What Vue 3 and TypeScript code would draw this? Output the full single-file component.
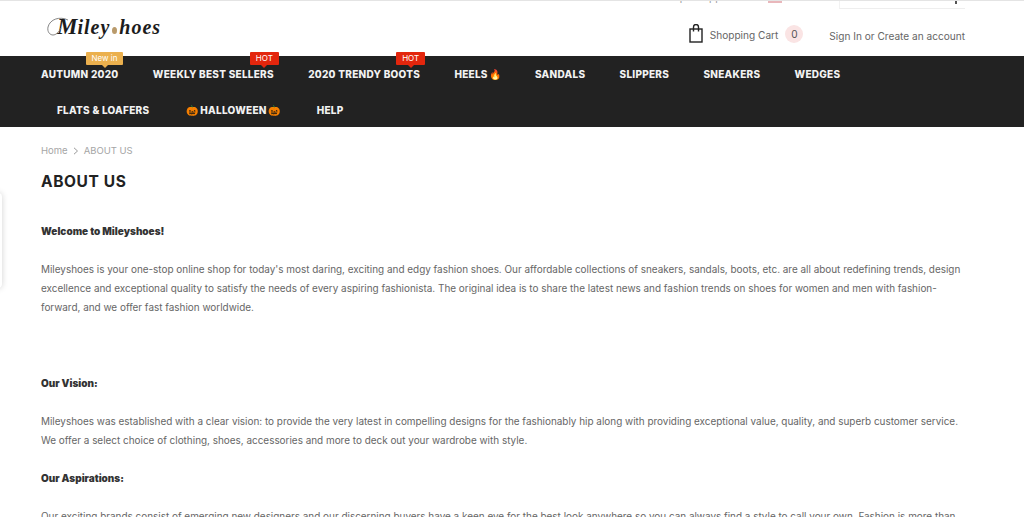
<template>
  <div class="page">
    <div class="topstrip">
      <span class="topinfo">
        <span class="clipped">Help &amp; support</span>
        <i class="flag"></i>
      </span>
      <div class="searchbox"><i class="searchdot"></i></div>
    </div>

    <header class="head">
      <div class="logo">
        <svg class="swash" width="22" height="22" viewBox="0 0 22 22" fill="none" stroke="#777" stroke-width="0.9">
          <path d="M21 3C13 -1 3 2 1 10c-1 5 2 8 5 8 3 0 6-3 8-7" />
        </svg>
        <span class="cap">M</span>iley<i class="logodot"></i>hoes
      </div>
      <div class="headright">
        <svg class="bag" width="14" height="19" viewBox="0 0 14 19" fill="none" stroke="#222" stroke-width="1.4">
          <rect x="1" y="5" width="12" height="13" />
          <path d="M4.500 7.500V3a2.500 2.500 0 0 1 5 0v4.500" />
        </svg>
        <span class="cart">Shopping Cart</span>
        <span class="count">0</span>
        <span class="account">Sign In or Create an account</span>
      </div>
    </header>

    <nav class="nav">
      <div v-for="(row, r) in navRows" :key="r" class="navrow" :class="'row' + r">
        <a v-for="item in row" :key="item.label" class="navitem">
          <span v-if="item.pre" class="emoji pre">{{ item.pre }}</span>{{ item.label }}<span v-if="item.post" class="emoji">{{ item.post }}</span>
          <span v-if="item.tag" class="tag" :class="item.tag === 'HOT' ? 'hot' : 'new'">{{ item.tag }}</span>
        </a>
      </div>
    </nav>

    <main class="content">
      <div class="crumbs">
        <span>Home</span>
        <svg width="6" height="8" viewBox="0 0 6 8" fill="none" stroke="#999" stroke-width="1"><path d="M1 .8 4.500 4 1 7.200" /></svg>
        <span>ABOUT US</span>
      </div>
      <h1>ABOUT US</h1>
      <p class="strong first">Welcome to Mileyshoes!</p>
      <p class="body">Mileyshoes is your one-stop online shop for today's most daring, exciting and edgy fashion shoes. Our affordable collections of sneakers, sandals, boots, etc. are all about redefining trends, design excellence and exceptional quality to satisfy the needs of every aspiring fashionista. The original idea is to share the latest news and fashion trends on shoes for women and men with fashion-forward, and we offer fast fashion worldwide.</p>
      <p class="strong vision">Our Vision:</p>
      <p class="body">Mileyshoes was established with a clear vision: to provide the very latest in compelling designs for the fashionably hip along with providing exceptional value, quality, and superb customer service. We offer a select choice of clothing, shoes, accessories and more to deck out your wardrobe with style.</p>
      <p class="strong asp">Our Aspirations:</p>
      <p class="body">Our exciting brands consist of emerging new designers and our discerning buyers have a keen eye for the best look anywhere so you can always find a style to call your own. Fashion is more than just clothes, it is a way to express yourself every single day.</p>
    </main>

    <div class="sidetab"></div>
  </div>
</template>

<script setup lang="ts">
interface NavItem {
  label: string
  tag?: string
  pre?: string
  post?: string
}

const navRows: NavItem[][] = [
  [
    { label: 'AUTUMN 2020', tag: 'New in' },
    { label: 'WEEKLY BEST SELLERS', tag: 'HOT' },
    { label: '2020 TRENDY BOOTS', tag: 'HOT' },
    { label: 'HEELS', post: '🔥' },
    { label: 'SANDALS' },
    { label: 'SLIPPERS' },
    { label: 'SNEAKERS' },
    { label: 'WEDGES' },
  ],
  [
    { label: 'FLATS & LOAFERS' },
    { label: 'HALLOWEEN', pre: '🎃', post: '🎃' },
    { label: 'HELP' },
  ],
]
</script>

<style>
html, body {
  margin: 0;
  background: #fff;
  overflow: hidden;
}
</style>

<style scoped>
.page {
  height: 517px;
  overflow: hidden;
  position: relative;
  font-family: Inter, "Liberation Sans", sans-serif;
  color: #555;
}

.topstrip {
  height: 9px;
  border-top: 1px solid #e4e4e4;
  box-sizing: border-box;
  display: flex;
  justify-content: flex-end;
  padding-right: 59px;
  overflow: hidden;
}
.topinfo {
  display: flex;
  align-items: flex-start;
  gap: 8px;
  margin-right: 57px;
  font-size: 10px;
  line-height: 12px;
  height: 3px;
  overflow: hidden;
  color: #999;
  width: 118px;
}
.clipped {
  display: block;
  width: 96px;
  margin-top: -10px;
}
.flag {
  display: block;
  width: 14px;
  height: 2px;
  background: #e9b7bb;
}
.searchbox {
  width: 126px;
  height: 8px;
  border-bottom: 1px solid #eee;
  border-left: 1px solid #f2f2f2;
  box-sizing: border-box;
  position: relative;
}
.searchdot {
  position: absolute;
  right: 8px;
  top: 0;
  width: 2px;
  height: 3px;
  background: #555;
}

.head {
  height: 47px;
  display: flex;
  justify-content: space-between;
  align-items: flex-start;
  padding: 0 59px 0 57px;
}
.logo {
  position: relative;
  font-family: "Liberation Serif", serif;
  font-style: italic;
  font-weight: 700;
  font-size: 20px;
  letter-spacing: 1px;
  line-height: 26px;
  color: #1c1c1c;
  margin-top: 5px;
  display: flex;
  align-items: baseline;
}
.swash {
  position: absolute;
  left: -10px;
  top: 3px;
}
.cap {
  font-size: 23px;
  margin-right: -1px;
}
.logodot {
  width: 5px;
  height: 7px;
  border-radius: 50%;
  background: #b99a6b;
  margin: 0 2px 0;
}
.headright {
  display: flex;
  align-items: center;
  margin-top: 16px;
  font-size: 10.100px;
  color: #666;
}
.bag {
  margin-right: 7px;
  margin-top: -1px;
}
.cart {
  margin-top: 1px;
}
.count {
  width: 18px;
  height: 18px;
  border-radius: 50%;
  background: #fae4e4;
  color: #555;
  text-align: center;
  line-height: 18px;
  margin-left: 7px;
  margin-right: 26px;
}
.account {
  margin-top: 3px;
}

.nav {
  background: #222;
  height: 71px;
  box-sizing: border-box;
  padding-left: 41px;
}
.navrow {
  display: flex;
  height: 36px;
  align-items: center;
  gap: 34.300px;
}
.row1 {
  padding-left: 16px;
  gap: 37px;
}
.navitem {
  position: relative;
  font-weight: 800;
  font-size: 10px;
  letter-spacing: 0.26px;
  color: #f2f2f2;
  white-space: nowrap;
  display: flex;
  align-items: center;
}
.emoji {
  font-size: 10px;
  letter-spacing: 0;
  margin-left: 1px;
}
.emoji.pre {
  margin: 0 2px 0 0;
}
.tag {
  position: absolute;
  top: -16px;
  right: -5px;
  height: 13px;
  line-height: 13px;
  padding: 0 5px;
  font-size: 8px;
  font-weight: 400;
  letter-spacing: 0;
  color: #fff;
  border-radius: 1px;
}
.tag::after {
  content: "";
  position: absolute;
  left: 50%;
  margin-left: -3px;
  top: 100%;
  border: 3px solid transparent;
  border-bottom-width: 0;
}
.tag.new {
  background: #ebb04e;
  left: 45px;
  right: auto;
  padding: 0 5.500px;
}
.tag.new::after {
  border-top-color: #ebb04e;
}
.tag.hot {
  background: #e3260d;
  padding: 0 6px;
}
.tag.hot::after {
  border-top-color: #e3260d;
}

.content {
  padding: 18px 58px 0 41px;
}
.crumbs {
  display: flex;
  align-items: center;
  gap: 5px;
  font-size: 9.500px;
  line-height: 12px;
  color: #a5a5a5;
}
h1 {
  margin: 15px 0 0;
  font-size: 15.500px;
  line-height: 20px;
  font-weight: 700;
  letter-spacing: 0.6px;
  color: #222;
}
p {
  margin: 0;
}
.strong {
  font-weight: 900;
  font-size: 10px;
  line-height: 14px;
  color: #333;
}
.first {
  margin-top: 32px;
}
.first + .body {
  margin-top: 22px;
}
.vision {
  margin-top: 59px;
}
.vision + .body {
  margin-top: 22px;
}
.asp {
  margin-top: 21px;
}
.body {
  font-size: 9.940px;
  line-height: 19px;
  color: #666;
  margin-top: 21px;
}
.asp + .body {
  margin-top: 22px;
}

.sidetab {
  position: absolute;
  left: -14px;
  top: 193px;
  width: 16px;
  height: 95px;
  border-radius: 4px;
  background: #fff;
  box-shadow: 0 0 6px rgba(0, 0, 0, 0.18);
}
</style>
